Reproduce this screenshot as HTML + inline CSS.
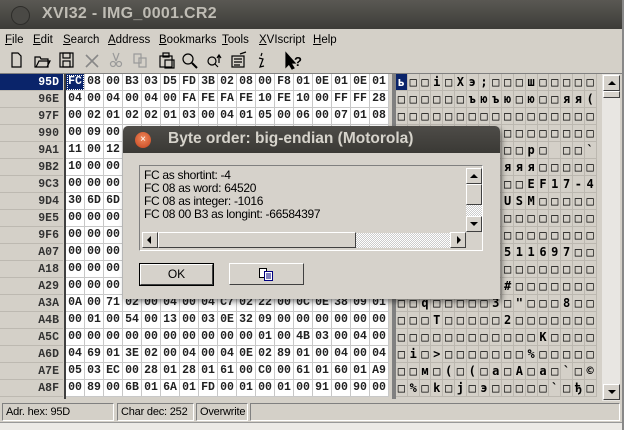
<!DOCTYPE html>
<html><head><meta charset="utf-8"><style>
*{box-sizing:border-box;margin:0;padding:0}
body{width:624px;height:430px;overflow:hidden;background:#d4d0c8;font-family:"Liberation Sans",sans-serif;position:relative}
.abs{position:absolute}
#title{left:0;top:0;width:624px;height:29px;background:linear-gradient(#5a5853,#3d3c38);}
#title .t{left:42px;top:5px;color:#bfbcb4;font-weight:bold;font-size:16px;letter-spacing:.3px}
#menu{top:31px;left:0;font-size:11.5px;color:#000}
#menu span{position:absolute;top:3px;white-space:nowrap}
#menu u{text-decoration:underline}
.row{position:absolute;left:0;height:17px;display:flex;font-family:"Liberation Mono",monospace;font-weight:bold;font-size:11.5px}
.ad{width:63px;height:17px;text-align:right;padding-right:4px;line-height:17px;color:#333;border-bottom:1px solid #bdb9b1;background:#d4d0c8}
.hx{position:absolute;left:66px;display:flex}
.hx span{width:19px;height:17px;line-height:16px;text-align:center;background:#fff;border-right:1px solid #c8c8c8;border-bottom:1px solid #c8c8c8;color:#222}
.ch{position:absolute;left:396px;display:flex}
.ch span{width:11.8px;height:17px;line-height:16px;text-align:center;border-right:1px solid #bcb8b0;border-bottom:1px solid #bcb8b0;color:#000;font-size:12px;font-family:"DejaVu Sans Mono",monospace}
.sel{background:#0a246a!important;color:#fff!important}
.btn{position:absolute;background:#d6d2cb;border:1px solid;border-color:#fff #404040 #404040 #fff}
.sb{position:absolute;top:2px;height:18px;border:1px solid;border-color:#808080 #fff #fff #808080;padding:2px 3px;white-space:nowrap;overflow:hidden;font-size:11px;letter-spacing:-.2px}
</style></head><body>
<div id="title" class="abs"><div class="abs" style="left:11px;top:6px;width:19px;height:19px;border-radius:50%;background:#4a4945;border:1px solid #2e2d2a"></div><div class="t abs">XVI32 - IMG_0001.CR2</div></div>
<div id="menu" class="abs">
<span style="left:5px"><u>F</u>ile</span><span style="left:33px"><u>E</u>dit</span><span style="left:63px"><u>S</u>earch</span><span style="left:108px"><u>A</u>ddress</span><span style="left:159px"><u>B</u>ookmarks</span><span style="left:222px"><u>T</u>ools</span><span style="left:259px"><u>X</u>VIscript</span><span style="left:313px"><u>H</u>elp</span></div>
<svg class="abs" style="left:0;top:49px" width="310" height="22" fill="none" stroke="#000" stroke-width="1.2">
<path d="M12 4h6l3 3v11h-9z"/><path d="M35 8h5l1 2h7v8h-13z M36 18l3-6h11l-3 6"/><rect x="60" y="4" width="13" height="14"/><rect x="63" y="4" width="7" height="5"/><rect x="63" y="12" width="7" height="6"/>
<path d="M86 6l12 12M98 6l-12 12" stroke="#888" stroke-width="1.6"/><path d="M113 4l3 8M119 4l-3 8" stroke="#999"/><circle cx="113" cy="15" r="2.5" stroke="#999"/><circle cx="119" cy="15" r="2.5" stroke="#999"/>
<rect x="134" y="5" width="7" height="9" stroke="#999"/><rect x="139" y="9" width="7" height="9" stroke="#999"/>
<rect x="160" y="7" width="12" height="11"/><rect x="163" y="4" width="6" height="4"/><rect x="165" y="11" width="9" height="8"/>
<circle cx="188" cy="10" r="5"/><path d="M192 14l5 5" stroke-width="2"/><circle cx="212" cy="12" r="4"/><path d="M215 15l3 3M219 6v8M217 9l2-3 2 3"/>
<rect x="232" y="7" width="12" height="11"/><path d="M234 10h8M234 13h8M234 16h6M240 5l6-2"/><path d="M262 4l-1 3M259 9l4 1-3 8 4-1"/><path d="M286 4v14l3-3 3 5 2-1-3-5h4z" fill="#000"/>
<text x="294" y="17" font-size="13" font-weight="bold" fill="#000" stroke="none" font-family="Liberation Sans">?</text></svg>
<div class="abs" style="left:0;top:73px;width:624px;height:1px;background:#808080"></div>
<div id="grid" class="abs" style="left:0;top:74px;width:602px;height:325px;overflow:hidden">
<div class="abs" style="left:64px;top:0;width:2px;height:325px;background:#404040"></div>
<div class="abs" style="left:392px;top:0;width:4px;height:325px;background:#808080"></div>
<div class="row" style="top:0"><div class="ad sel">95D</div><div class="hx"><span class="sel" style="outline:1px dotted #fff;outline-offset:-2px">FC</span><span>08</span><span>00</span><span>B3</span><span>03</span><span>D5</span><span>FD</span><span>3B</span><span>02</span><span>08</span><span>00</span><span>F8</span><span>01</span><span>0E</span><span>01</span><span>0E</span><span>01</span></div><div class="ch"><span class="sel">ь</span><span>□</span><span>□</span><span>i</span><span>□</span><span>X</span><span>э</span><span>;</span><span>□</span><span>□</span><span>□</span><span>ш</span><span>□</span><span>□</span><span>□</span><span>□</span><span>□</span></div></div>
<div class="row" style="top:17px"><div class="ad">96E</div><div class="hx"><span>04</span><span>00</span><span>04</span><span>00</span><span>04</span><span>00</span><span>FA</span><span>FE</span><span>FA</span><span>FE</span><span>10</span><span>FE</span><span>10</span><span>00</span><span>FF</span><span>FF</span><span>28</span></div><div class="ch"><span>□</span><span>□</span><span>□</span><span>□</span><span>□</span><span>□</span><span>ъ</span><span>ю</span><span>ъ</span><span>ю</span><span>□</span><span>ю</span><span>□</span><span>□</span><span>я</span><span>я</span><span>(</span></div></div>
<div class="row" style="top:34px"><div class="ad">97F</div><div class="hx"><span>00</span><span>02</span><span>01</span><span>02</span><span>02</span><span>01</span><span>03</span><span>00</span><span>04</span><span>01</span><span>05</span><span>00</span><span>06</span><span>00</span><span>07</span><span>01</span><span>08</span></div><div class="ch"><span>□</span><span>□</span><span>□</span><span>□</span><span>□</span><span>□</span><span>□</span><span>□</span><span>□</span><span>□</span><span>□</span><span>□</span><span>□</span><span>□</span><span>□</span><span>□</span><span>□</span></div></div>
<div class="row" style="top:51px"><div class="ad">990</div><div class="hx"><span>00</span><span>09</span><span>00</span><span>00</span><span>00</span><span>00</span><span>00</span><span>00</span><span>00</span><span>00</span><span>00</span><span>00</span><span>00</span><span>00</span><span>00</span><span>00</span><span>00</span></div><div class="ch"><span>□</span><span>□</span><span>□</span><span>□</span><span>□</span><span>□</span><span>□</span><span>□</span><span>□</span><span>□</span><span>□</span><span>□</span><span>□</span><span>□</span><span>□</span><span>□</span><span>□</span></div></div>
<div class="row" style="top:68px"><div class="ad">9A1</div><div class="hx"><span>11</span><span>00</span><span>12</span><span>00</span><span>00</span><span>00</span><span>00</span><span>00</span><span>00</span><span>00</span><span>00</span><span>00</span><span>00</span><span>00</span><span>00</span><span>00</span><span>00</span></div><div class="ch"><span>□</span><span>□</span><span>□</span><span>□</span><span>□</span><span>□</span><span>□</span><span>□</span><span>□</span><span>□</span><span>□</span><span>p</span><span>□</span><span> </span><span>□</span><span>□</span><span>`</span></div></div>
<div class="row" style="top:85px"><div class="ad">9B2</div><div class="hx"><span>10</span><span>00</span><span>00</span><span>00</span><span>00</span><span>00</span><span>00</span><span>00</span><span>00</span><span>00</span><span>00</span><span>00</span><span>00</span><span>00</span><span>00</span><span>00</span><span>00</span></div><div class="ch"><span>□</span><span>□</span><span>□</span><span>□</span><span>□</span><span>□</span><span>□</span><span>□</span><span>□</span><span>я</span><span>я</span><span>я</span><span>□</span><span>□</span><span>□</span><span>□</span><span>□</span></div></div>
<div class="row" style="top:102px"><div class="ad">9C3</div><div class="hx"><span>00</span><span>00</span><span>00</span><span>00</span><span>00</span><span>00</span><span>00</span><span>00</span><span>00</span><span>00</span><span>00</span><span>00</span><span>00</span><span>00</span><span>00</span><span>00</span><span>00</span></div><div class="ch"><span>□</span><span>□</span><span>□</span><span>□</span><span>□</span><span>□</span><span>□</span><span>□</span><span>□</span><span>□</span><span>□</span><span>E</span><span>F</span><span>1</span><span>7</span><span>-</span><span>4</span></div></div>
<div class="row" style="top:119px"><div class="ad">9D4</div><div class="hx"><span>30</span><span>6D</span><span>6D</span><span>00</span><span>00</span><span>00</span><span>00</span><span>00</span><span>00</span><span>00</span><span>00</span><span>00</span><span>00</span><span>00</span><span>00</span><span>00</span><span>00</span></div><div class="ch"><span>□</span><span>□</span><span>□</span><span>□</span><span>□</span><span>□</span><span>□</span><span>□</span><span>□</span><span>U</span><span>S</span><span>M</span><span>□</span><span>□</span><span>□</span><span>□</span><span>□</span></div></div>
<div class="row" style="top:136px"><div class="ad">9E5</div><div class="hx"><span>00</span><span>00</span><span>00</span><span>00</span><span>00</span><span>00</span><span>00</span><span>00</span><span>00</span><span>00</span><span>00</span><span>00</span><span>00</span><span>00</span><span>00</span><span>00</span><span>00</span></div><div class="ch"><span>□</span><span>□</span><span>□</span><span>□</span><span>□</span><span>□</span><span>□</span><span>□</span><span>□</span><span>□</span><span>□</span><span>□</span><span>□</span><span>□</span><span>□</span><span>□</span><span>□</span></div></div>
<div class="row" style="top:153px"><div class="ad">9F6</div><div class="hx"><span>00</span><span>00</span><span>00</span><span>00</span><span>00</span><span>00</span><span>00</span><span>00</span><span>00</span><span>00</span><span>00</span><span>00</span><span>00</span><span>00</span><span>00</span><span>00</span><span>00</span></div><div class="ch"><span>□</span><span>□</span><span>□</span><span>□</span><span>□</span><span>□</span><span>□</span><span>□</span><span>□</span><span>□</span><span>□</span><span>□</span><span>□</span><span>□</span><span>□</span><span>□</span><span>□</span></div></div>
<div class="row" style="top:170px"><div class="ad">A07</div><div class="hx"><span>00</span><span>00</span><span>00</span><span>00</span><span>00</span><span>00</span><span>00</span><span>00</span><span>00</span><span>00</span><span>00</span><span>00</span><span>00</span><span>00</span><span>00</span><span>00</span><span>00</span></div><div class="ch"><span>□</span><span>□</span><span>□</span><span>□</span><span>□</span><span>□</span><span>□</span><span>□</span><span>□</span><span>5</span><span>1</span><span>1</span><span>6</span><span>9</span><span>7</span><span>□</span><span>□</span></div></div>
<div class="row" style="top:187px"><div class="ad">A18</div><div class="hx"><span>00</span><span>00</span><span>00</span><span>00</span><span>00</span><span>00</span><span>00</span><span>00</span><span>00</span><span>00</span><span>00</span><span>00</span><span>00</span><span>00</span><span>00</span><span>00</span><span>00</span></div><div class="ch"><span>□</span><span>□</span><span>□</span><span>□</span><span>□</span><span>□</span><span>□</span><span>□</span><span>□</span><span>□</span><span>□</span><span>□</span><span>□</span><span>□</span><span>□</span><span>□</span><span>□</span></div></div>
<div class="row" style="top:204px"><div class="ad">A29</div><div class="hx"><span>00</span><span>00</span><span>00</span><span>00</span><span>00</span><span>00</span><span>00</span><span>00</span><span>00</span><span>00</span><span>00</span><span>00</span><span>00</span><span>00</span><span>00</span><span>00</span><span>00</span></div><div class="ch"><span>□</span><span>□</span><span>□</span><span>□</span><span>□</span><span>□</span><span>□</span><span>□</span><span>□</span><span>#</span><span>□</span><span>□</span><span>□</span><span>□</span><span>□</span><span>□</span><span>□</span></div></div>
<div class="row" style="top:221px"><div class="ad">A3A</div><div class="hx"><span>0A</span><span>00</span><span>71</span><span>02</span><span>00</span><span>04</span><span>00</span><span>04</span><span>C7</span><span>02</span><span>22</span><span>00</span><span>0C</span><span>0E</span><span>38</span><span>09</span><span>01</span></div><div class="ch"><span>□</span><span>□</span><span>q</span><span>□</span><span>□</span><span>□</span><span>□</span><span>□</span><span>З</span><span>□</span><span>"</span><span>□</span><span>□</span><span>□</span><span>8</span><span>□</span><span>□</span></div></div>
<div class="row" style="top:238px"><div class="ad">A4B</div><div class="hx"><span>00</span><span>01</span><span>00</span><span>54</span><span>00</span><span>13</span><span>00</span><span>03</span><span>0E</span><span>32</span><span>09</span><span>00</span><span>00</span><span>00</span><span>00</span><span>00</span><span>00</span></div><div class="ch"><span>□</span><span>□</span><span>□</span><span>T</span><span>□</span><span>□</span><span>□</span><span>□</span><span>□</span><span>2</span><span>□</span><span>□</span><span>□</span><span>□</span><span>□</span><span>□</span><span>□</span></div></div>
<div class="row" style="top:255px"><div class="ad">A5C</div><div class="hx"><span>00</span><span>00</span><span>00</span><span>00</span><span>00</span><span>00</span><span>00</span><span>00</span><span>00</span><span>00</span><span>01</span><span>00</span><span>4B</span><span>03</span><span>00</span><span>04</span><span>00</span></div><div class="ch"><span>□</span><span>□</span><span>□</span><span>□</span><span>□</span><span>□</span><span>□</span><span>□</span><span>□</span><span>□</span><span>□</span><span>□</span><span>K</span><span>□</span><span>□</span><span>□</span><span>□</span></div></div>
<div class="row" style="top:272px"><div class="ad">A6D</div><div class="hx"><span>04</span><span>69</span><span>01</span><span>3E</span><span>02</span><span>00</span><span>04</span><span>00</span><span>04</span><span>0E</span><span>02</span><span>89</span><span>01</span><span>00</span><span>04</span><span>00</span><span>04</span></div><div class="ch"><span>□</span><span>i</span><span>□</span><span>&gt;</span><span>□</span><span>□</span><span>□</span><span>□</span><span>□</span><span>□</span><span>□</span><span>%</span><span>□</span><span>□</span><span>□</span><span>□</span><span>□</span></div></div>
<div class="row" style="top:289px"><div class="ad">A7E</div><div class="hx"><span>05</span><span>03</span><span>EC</span><span>00</span><span>28</span><span>01</span><span>28</span><span>01</span><span>61</span><span>00</span><span>C0</span><span>00</span><span>61</span><span>01</span><span>60</span><span>01</span><span>A9</span></div><div class="ch"><span>□</span><span>□</span><span>м</span><span>□</span><span>(</span><span>□</span><span>(</span><span>□</span><span>a</span><span>□</span><span>A</span><span>□</span><span>a</span><span>□</span><span>`</span><span>□</span><span>©</span></div></div>
<div class="row" style="top:306px"><div class="ad">A8F</div><div class="hx"><span>00</span><span>89</span><span>00</span><span>6B</span><span>01</span><span>6A</span><span>01</span><span>FD</span><span>00</span><span>01</span><span>00</span><span>01</span><span>00</span><span>91</span><span>00</span><span>90</span><span>00</span></div><div class="ch"><span>□</span><span>%</span><span>□</span><span>k</span><span>□</span><span>j</span><span>□</span><span>э</span><span>□</span><span>□</span><span>□</span><span>□</span><span>□</span><span>`</span><span>□</span><span>ђ</span><span>□</span></div></div>
</div>
<div class="abs" style="left:602px;top:74px;width:18px;height:327px;background:#e8e6e2"></div>
<div class="btn" style="left:603px;top:75px;width:17px;height:16px"><div class="abs" style="left:4px;top:5px;border:4px solid transparent;border-bottom:4px solid #000;border-top:0"></div></div>
<div class="btn" style="left:603px;top:91px;width:17px;height:7px"></div>
<div class="btn" style="left:603px;top:384px;width:17px;height:16px"><div class="abs" style="left:4px;top:5px;border:4px solid transparent;border-top:4px solid #000;border-bottom:0"></div></div>
<div class="abs" style="left:0;top:401px;width:622px;height:21px;color:#000">
<div class="sb" style="left:2px;width:112px">Adr. hex: 95D</div>
<div class="sb" style="left:117px;width:77px">Char dec: 252</div>
<div class="sb" style="left:196px;width:52px">Overwrite</div>
<div class="sb" style="left:250px;width:370px"></div></div>
<div class="abs" style="left:0;top:422px;width:624px;height:8px;background:#eceae6;border-top:1px solid #999"></div>
<div class="abs" style="left:622px;top:0;width:2px;height:430px;background:#888"></div>
<!-- dialog -->
<div class="abs" style="left:123px;top:126px;width:377px;height:173px;background:#d6d2cb;border-radius:5px 5px 0 0;box-shadow:2px 3px 6px rgba(0,0,0,.45);overflow:hidden">
<div class="abs" style="left:0;top:0;width:377px;height:27px;background:linear-gradient(#4e4c48,#3a3935)"></div>
<div class="abs" style="left:12px;top:6px;width:16px;height:16px;border-radius:50%;background:radial-gradient(circle at 50% 40%,#f08a5d,#c4421c);color:#fff;font-size:10px;line-height:16px;text-align:center">×</div>
<div class="abs" style="left:45px;top:4px;color:#d6d3cb;font-weight:bold;font-size:15.5px;white-space:nowrap">Byte order: big-endian (Motorola)</div>
<div class="abs" style="left:16px;top:39px;width:344px;height:86px;border:1px solid;border-color:#808080 #fff #fff #808080;background:#d6d2cb">
<div class="abs" style="left:4px;top:3px;font-size:12px;line-height:13px;color:#000;letter-spacing:-.3px;white-space:nowrap">FC as shortint: -4<br>FC 08 as word: 64520<br>FC 08 as integer: -1016<br>FC 08 00 B3 as longint: -66584397</div>
<div class="btn" style="left:326px;top:2px;width:16px;height:16px"><div class="abs" style="left:3px;top:5px;border:4px solid transparent;border-bottom:4px solid #000;border-top:0"></div></div>
<div class="btn" style="left:326px;top:18px;width:16px;height:21px"></div>
<div class="abs" style="left:326px;top:39px;width:16px;height:11px;background:repeating-conic-gradient(#fff 0 25%,#ccc 0 50%) 0 0/2px 2px"></div>
<div class="btn" style="left:326px;top:50px;width:16px;height:16px"><div class="abs" style="left:3px;top:5px;border:4px solid transparent;border-top:4px solid #000;border-bottom:0"></div></div>
<div class="btn" style="left:2px;top:66px;width:16px;height:16px"><div class="abs" style="left:4px;top:3px;border:4px solid transparent;border-right:4px solid #000;border-left:0"></div></div>
<div class="btn" style="left:18px;top:66px;width:198px;height:16px"></div>
<div class="abs" style="left:216px;top:67px;width:94px;height:15px;background:repeating-conic-gradient(#fff 0 25%,#ccc 0 50%) 0 0/2px 2px"></div>
<div class="btn" style="left:310px;top:66px;width:16px;height:16px"><div class="abs" style="left:6px;top:3px;border:4px solid transparent;border-left:4px solid #000;border-right:0"></div></div>
</div>
<div class="abs" style="left:16px;top:137px;width:75px;height:23px;border:1px solid #000"><div class="btn" style="left:0;top:0;width:73px;height:21px;font-size:12px;text-align:center;line-height:19px">OK</div></div>
<div class="btn" style="left:106px;top:137px;width:75px;height:22px">
<svg class="abs" style="left:28px;top:3px" width="18" height="15" fill="#fff" stroke="#000" stroke-width="1"><rect x="1.5" y="1.5" width="7" height="9"/><rect x="6.5" y="4.5" width="8" height="9" stroke="#000080"/><path d="M8 7h5M8 9h5M8 11h5" stroke="#000080"/></svg></div>
</div>
</body></html>
